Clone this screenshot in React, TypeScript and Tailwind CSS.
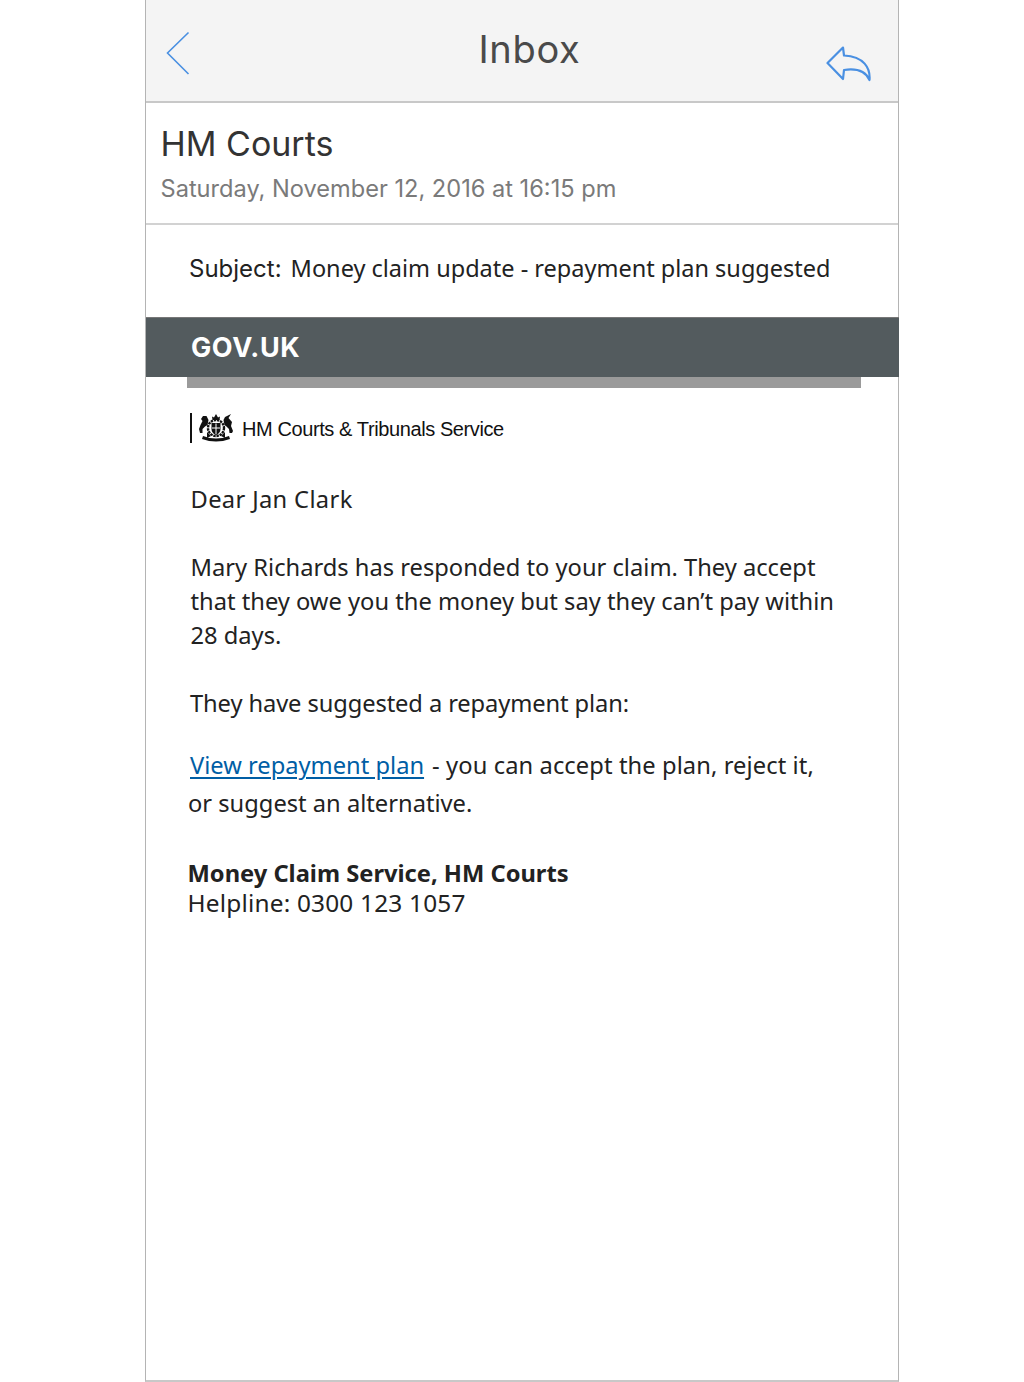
import React from 'react';

const sf = "font-['Inter','Liberation_Sans',sans-serif]";
const gds = "font-['Noto_Sans','Liberation_Sans',sans-serif]";

function Crest() {
  return (
    <svg width="36" height="30" viewBox="0 0 36 30" fill="#111">
      {/* crown */}
      <path d="M14.5 7 L14 3.5 L16 4.5 L18 1 L20 4.5 L22 3.5 L21.5 7 Z" />
      {/* garter */}
      <circle cx="18" cy="15" r="8" fill="none" stroke="#111" strokeWidth="2.4" strokeDasharray="2.4 0.8" />
      {/* shield */}
      <path d="M13.5 10 H22.5 V16 Q22.5 20 18 22 Q13.5 20 13.5 16 Z" />
      <path d="M18 10.5 V21 M14 15 H22" stroke="#fff" strokeWidth="1" />
      {/* lion */}
      <path d="M8.5 3 L5 3 L3 6 L4.5 8 L2.5 12 L1 16 L2 20 L4.5 20 L4.5 16 L7 13.5 L9.5 12 L10.5 7 Z" />
      {/* unicorn */}
      <path d="M27 4 L33 1 L30.5 5 L34 9 L33 13 L35 18 L34 20 L31.5 20 L31 16 L28.5 13.5 L26.5 12 L25.5 7 Z" />
      {/* motto ribbon */}
      <path d="M5 23 Q18 28 31 23 L32 26 Q18 31 4 26 Z" />
      <path d="M9 19 L13 23 L9 25 Z M27 19 L23 23 L27 25 Z" />
    </svg>
  );
}

export default function App() {
  return (
    <div className="min-h-screen bg-white">
      <div className="ml-[145px] flex h-[1382px] w-[754px] flex-col border-x border-b-2 border-x-[#b4b4b4] border-b-[#c8c8c8] bg-white">
        {/* nav bar */}
        <div className="flex h-[103px] shrink-0 items-start justify-between border-b-2 border-[#c8c8c8] bg-[#f4f4f4]">
          <svg className="mt-[31px] ml-[20px]" width="24" height="44" viewBox="0 0 24 44" fill="none" stroke="#4a90e2" strokeWidth="1.6">
            <path d="M22.5 1.5 L1.5 22 L22.5 43" />
          </svg>
          <h1 className={`${sf} mt-[26px] ml-[43px] text-[38px] leading-[46px] font-normal tracking-[0.7px] text-[#4a4a4a]`}>Inbox</h1>
          <svg className="mt-[46px] mr-[26px]" width="46" height="36" viewBox="0 0 46 36" fill="none" stroke="#4a90e2" strokeWidth="2.2" strokeLinejoin="round" strokeLinecap="round">
            <path d="M17 1.5 L1.5 17 L17 33 L18 24 C28 22.5 39 24 43.5 34 C44.5 22 38 10.5 18 9.5 Z" />
          </svg>
        </div>

        {/* sender */}
        <div className={`${sf} h-[122px] shrink-0 border-b-2 border-[#d2d2d2] pt-[20px] pl-[14.5px]`}>
          <div className="text-[34px] leading-[42px] text-[#333]">HM Courts</div>
          <div className="mt-[10px] text-[23.6px] leading-[28px] text-[#7a7a7a]">Saturday, November 12, 2016 at 16:15 pm</div>
        </div>

        {/* subject */}
        <div className={`${gds} flex h-[92px] shrink-0 items-start gap-[9px] pt-[27px] pl-[43px] text-[23.5px] leading-[32px] text-[#222]`}>
          <span className={`${sf} pt-px text-[24px]`}>Subject:</span>
          <span>Money claim update - repayment plan suggested</span>
        </div>

        {/* gov.uk banner */}
        <div className="-mr-px flex h-[60px] shrink-0 items-center border-t border-[#777] bg-[#535b5e] pt-[2px] pl-[45px]">
          <span className={`${sf} text-[27px] font-bold tracking-[0.6px] text-white`}>GOV.UK</span>
        </div>
        <div className="ml-[41px] h-[11px] w-[674px] shrink-0 bg-[#9a9a9a]" />

        {/* email body */}
        <div className={`${gds} text-[23.7px] text-[#222]`}>
          <div className="mt-[25px] ml-[44px] flex h-[30px] items-center">
            <div className="h-[30px] w-[2px] bg-[#111]" />
            <div className="ml-[6px] flex">
              <Crest />
            </div>
            <span className="mt-[2px] ml-[8px] font-['Liberation_Sans',sans-serif] text-[20px] tracking-[-0.4px] text-[#111]">HM Courts &amp; Tribunals Service</span>
          </div>

          <p className="mt-[39px] ml-[44.5px] leading-[34px] tracking-[0.35px]">Dear Jan Clark</p>
          <p className="mt-[34px] ml-[44.5px] w-[670px] leading-[34px]">
            Mary Richards has responded to your claim. They accept that they owe you the money but say they can’t pay within 28 days.
          </p>
          <p className="mt-[34px] ml-[44px] leading-[34px] tracking-[-0.1px]">They have suggested a repayment plan:</p>
          <p className="mt-[26px] ml-[44px] leading-[38px]">
            <a href="#" className="text-[#005ea5] underline decoration-2 underline-offset-[3px]">View repayment plan</a>
            <span className="ml-[8px] tracking-[0.1px]">- you can accept the plan, reject it,</span>
          </p>
          <p className="ml-[42px] leading-[38px]">or suggest an alternative.</p>
          <div className="mt-[37px] ml-[41.5px] leading-[29px]">
            <div className="font-bold">Money Claim Service, HM Courts</div>
            <div className="text-[24.4px] tracking-[0.2px]">Helpline: 0300 123 1057</div>
          </div>
        </div>
      </div>
    </div>
  );
}
